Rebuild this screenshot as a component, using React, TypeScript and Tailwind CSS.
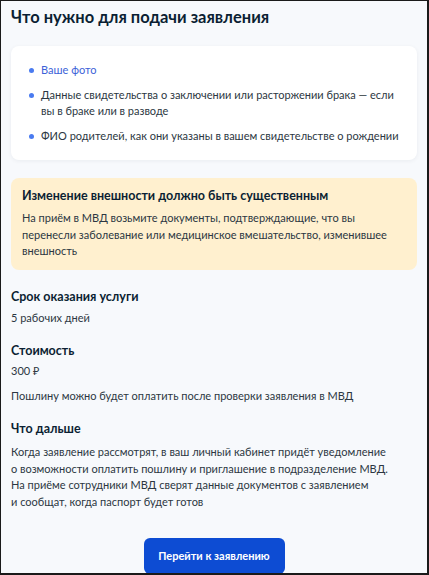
import React from "react";

const DOCS = [
  { text: "Ваше фото", link: true },
  { text: "Данные свидетельства о\u00a0заключении или расторжении брака\u00a0— если вы в\u00a0браке или в\u00a0разводе" },
  { text: "ФИО родителей, как они указаны в\u00a0вашем свидетельстве о\u00a0рождении" },
];

function Section({ title, className, children }: { title: string; className: string; children: React.ReactNode }) {
  return (
    <div className={className}>
      <h3 className="text-[12.5px] font-bold leading-[20px] text-[#0b1f33]">{title}</h3>
      {children}
    </div>
  );
}

export default function App() {
  return (
    <div
      className="h-[575px] w-[429px] overflow-hidden border-t border-l border-r-2 border-b-2 border-[#1a1a1a] bg-[#f7f9fc] px-[10px] text-[#0b1f33]"
      style={{ fontFamily: "Lato, 'Noto Sans', sans-serif" }}
    >
      <h2 className="pt-[4px] text-[16.5px] font-bold leading-[24px]">Что нужно для подачи заявления</h2>

      <div className="mt-[17px] rounded-[8px] bg-white px-[18px] py-[16px] shadow-[0_1px_4px_rgba(11,31,51,0.06)]">
        <ul className="flex flex-col gap-[9px]">
          {DOCS.map((d) => (
            <li key={d.text} className="flex gap-[7px] text-[11px] leading-[16px]">
              <span className="mt-[6px] h-[5px] w-[5px] shrink-0 rounded-full bg-[#4a7bf0]" />
              <span className={d.link ? "text-[#3c62d8]" : "text-[#2c3742]"}>{d.text}</span>
            </li>
          ))}
        </ul>
      </div>

      <div className="mt-[18px] rounded-[8px] bg-[#fff0cf] px-[11px] pt-[8px] pb-[10px]">
        <p className="text-[12.5px] font-bold leading-[20px]">Изменение внешности должно быть существенным</p>
        <p className="mt-[4px] max-w-[365px] text-[11px] leading-[16.5px] text-[#2c3742]">
          На приём в&nbsp;МВД возьмите документы, подтверждающие, что вы перенесли заболевание или медицинское вмешательство, изменившее внешность
        </p>
      </div>

      <div className="text-[11px] leading-[16.5px] text-[#2c3742]">
        <Section title="Срок оказания услуги" className="mt-[17px]">
          <p className="mt-[3px]">5 рабочих дней</p>
        </Section>
        <Section title="Стоимость" className="mt-[15px]">
          <p className="mt-[2px]">300 ₽</p>
          <p className="mt-[8px]">Пошлину можно будет оплатить после проверки заявления в&nbsp;МВД</p>
        </Section>
        <Section title="Что дальше" className="mt-[15px]">
          <p className="mt-[5px] max-w-[382px] leading-[16.6px]">
            Когда заявление рассмотрят, в&nbsp;ваш личный кабинет придёт уведомление о&nbsp;возможности оплатить пошлину и&nbsp;приглашение в&nbsp;подразделение МВД.
            На&nbsp;приёме сотрудники МВД сверят данные документов с&nbsp;заявлением и&nbsp;сообщат, когда паспорт будет готов
          </p>
        </Section>
      </div>

      <div className="mt-[28px] flex justify-center">
        <button className="h-[36px] w-[141px] rounded-[6px] bg-[#0d4cd3] text-[11px] font-bold text-white">
          Перейти к заявлению
        </button>
      </div>
    </div>
  );
}
